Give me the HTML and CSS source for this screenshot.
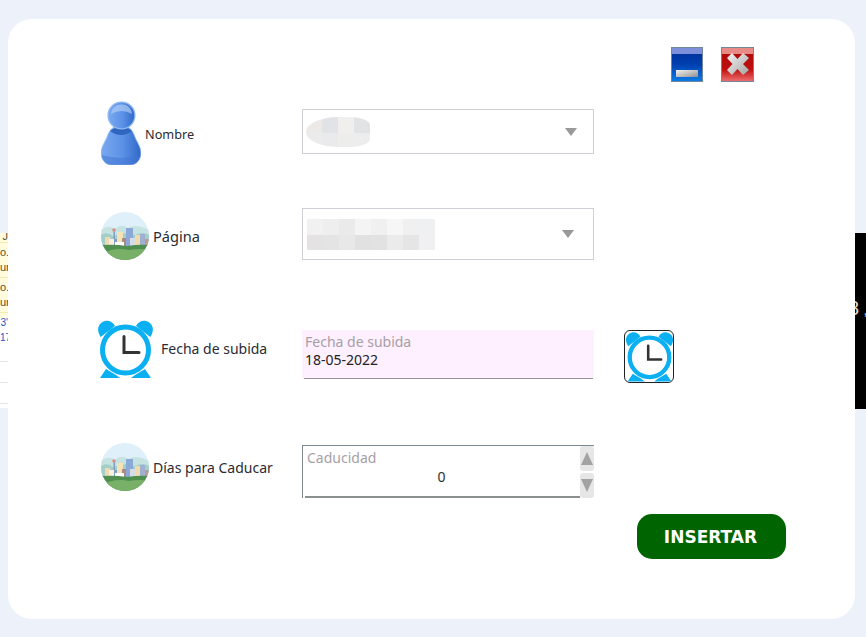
FILE: index.html
```html
<!DOCTYPE html>
<html lang="es">
<head>
  <meta charset="UTF-8" />
  <title>Insertar</title>
  <link rel="stylesheet" href="styles.css">
</head>
<body>
  <svg class="sprite" aria-hidden="true">
    <symbol id="scene" viewBox="0 0 48 48">
      <rect width="48" height="48" fill="#dff0fb"/>
      <path d="M0 18 Q7 12 14 17 Q20 11 27 16 Q35 11 48 18 V34 H0 Z" fill="#c6e3e2"/>
      <path d="M0 23 Q6 19 12 24 Q24 19 34 23 Q42 19 48 23 V34 H0 Z" fill="#a4cfc8"/>
      <rect x="12.500" y="19" width="1.500" height="14" fill="#7f9fc4"/>
      <circle cx="13" cy="18" r="1.800" fill="#dc8f88"/>
      <rect x="4" y="25" width="5" height="9" fill="#efd9b4"/>
      <rect x="8" y="27" width="5" height="7" fill="#f8f0dc"/>
      <rect x="13" y="27" width="3" height="7" fill="#7f9fc8"/>
      <rect x="16" y="20" width="6" height="13" fill="#f5e3b8"/>
      <rect x="21" y="26" width="4" height="8" fill="#a88a80"/>
      <rect x="25" y="16" width="7" height="18" fill="#8aa8d8"/>
      <rect x="29" y="26" width="5" height="8" fill="#d6dde8"/>
      <rect x="34" y="23" width="5" height="10" fill="#efdcae"/>
      <rect x="39" y="22" width="5" height="11" fill="#9fb0d2"/>
      <rect x="44" y="27" width="4" height="7" fill="#b89c96"/>
      <rect x="14" y="30" width="9" height="4" fill="#fff"/>
      <path d="M0 33 Q14 32 26 34 Q38 32 48 33 V48 H0 Z" fill="#4f9050"/>
      <path d="M0 42 Q14 35 28 38 Q40 36 48 38 V48 H0 Z" fill="#79b068"/>
    </symbol>
    <symbol id="alarm" viewBox="0 0 57 58">
      <path d="M3.700 17 C-1 10 1 3 8 1 C12 0 16 2 18 6 Z" fill="#0bb0f3"/>
      <path d="M53.300 17 C58 10 56 3 49 1 C45 0 41 2 39 6 Z" fill="#0bb0f3"/>
      <path d="M3 58 L9 49 L19 55 L23 58 Z" fill="#0bb0f3"/>
      <path d="M54 58 L48 49 L38 55 L34 58 Z" fill="#0bb0f3"/>
      <circle cx="28.500" cy="30" r="23" fill="#fff" stroke="#0bb0f3" stroke-width="5"/>
      <path d="M27 16.500 V32.500 H42" fill="none" stroke="#333" stroke-width="3" stroke-linecap="round"/>
    </symbol>
  </svg>

  <div class="desk">
    <div class="back-left">
      <div class="back-row back-note back-first">J</div>
      <div class="back-row back-note">o.<br>ur</div>
      <div class="back-row back-note">o.<br>ur</div>
      <div class="back-row back-blue">3'<br>17</div>
      <div class="back-row back-line"></div>
      <div class="back-row back-line"></div>
      <div class="back-tail"></div>
    </div>

    <main class="card">
      <div class="win-buttons">
        <button class="win-btn" type="button" aria-label="Minimizar">
          <svg width="32" height="35" viewBox="0 0 32 35">
            <defs>
              <linearGradient id="minBg" x1="0" y1="0" x2="0" y2="1">
                <stop offset="0" stop-color="#002c94"/>
                <stop offset="0.5" stop-color="#0040b0"/>
                <stop offset="1" stop-color="#0a7ce6"/>
              </linearGradient>
              <linearGradient id="minBar" x1="0" y1="0" x2="1" y2="1">
                <stop offset="0" stop-color="#f4f4f4"/>
                <stop offset="1" stop-color="#8f8f8f"/>
              </linearGradient>
            </defs>
            <rect x="0.500" y="0.500" width="31" height="34" fill="url(#minBg)" stroke="#72869c"/>
            <rect x="1" y="1" width="30" height="6" fill="#7d8fdb"/>
            <rect x="5" y="23" width="22" height="7" fill="url(#minBar)"/>
          </svg>
        </button>
        <button class="win-btn" type="button" aria-label="Cerrar">
          <svg width="33" height="35" viewBox="0 0 33 35">
            <defs>
              <linearGradient id="closeBg" x1="0" y1="0" x2="0" y2="1">
                <stop offset="0" stop-color="#a80a0a"/>
                <stop offset="0.65" stop-color="#c01010"/>
                <stop offset="1" stop-color="#f07070"/>
              </linearGradient>
              <linearGradient id="closeX" x1="0" y1="0" x2="1" y2="1">
                <stop offset="0" stop-color="#f4f4f4"/>
                <stop offset="1" stop-color="#a4a4a4"/>
              </linearGradient>
            </defs>
            <rect x="0.500" y="0.500" width="32" height="34" fill="url(#closeBg)" stroke="#72869c"/>
            <rect x="1" y="1" width="31" height="6" fill="#e88a86"/>
            <path d="M6 11 L11 6 L16.500 12 L22 6 L28 11 L22 17 L28 23 L22 28 L16.500 22 L11 28 L6 23 L11.500 17 Z" fill="url(#closeX)"/>
          </svg>
        </button>
      </div>

      <form class="form">
        <div class="row row-nombre">
          <div class="head">
            <svg class="icon-user" width="40" height="64" viewBox="0 0 40 64">
              <defs>
                <linearGradient id="userBody" x1="0" y1="0" x2="1" y2="0">
                  <stop offset="0" stop-color="#7aa9f0"/>
                  <stop offset="0.55" stop-color="#5b90e6"/>
                  <stop offset="1" stop-color="#2f68c6"/>
                </linearGradient>
              </defs>
              <path d="M20 24 C12 24 8 30 6 36 C4 41 0 46 0 52 C0 59 5 64 11 64 H29 C35 64 40 59 40 52 C40 46 36 41 34 36 C32 30 28 24 20 24 Z" fill="url(#userBody)" stroke="#9cc2f4" stroke-width="0.800"/>
              <path d="M9 30 Q20 22 31 30 Q20 38 9 30 Z" fill="#2f66bf"/>
              <path d="M0.500 54 Q20 60 39.500 54 Q38 64 29 64 H11 Q2 64 0.500 54 Z" fill="#3f74d2" opacity="0.5"/>
              <circle cx="20.500" cy="14.500" r="13.400" fill="url(#userBody)" stroke="#8fb8f0" stroke-width="1.300"/>
              <path d="M10 13 Q11 3.500 20.500 3.500 Q30 3.500 31 13 Q20.500 7 10 13 Z" fill="#b4d0f6" opacity="0.65"/>
            </svg>
            <label class="lbl lbl-nombre">Nombre</label>
          </div>
          <div class="select select-nombre">
            <div class="smudge smudge-nombre"></div>
            <span class="arrow"></span>
          </div>
        </div>

        <div class="row row-pagina">
          <div class="head head-pagina">
            <svg class="icon-scene"><use href="#scene"/></svg>
            <label class="lbl lbl-pagina">Página</label>
          </div>
          <div class="select select-pagina">
            <div class="smudge smudge-pagina"></div>
            <span class="arrow"></span>
          </div>
        </div>

        <div class="row row-fecha">
          <div class="head head-fecha">
            <svg class="icon-alarm"><use href="#alarm"/></svg>
            <label class="lbl lbl-fecha">Fecha de subida</label>
          </div>
          <div class="date-field">
            <span class="float-lbl">Fecha de subida</span>
            <span class="date-value">18-05-2022</span>
          </div>
          <button class="alarm-btn" type="button" aria-label="Elegir fecha">
            <svg class="icon-alarm-small"><use href="#alarm"/></svg>
          </button>
        </div>

        <div class="row row-dias">
          <div class="head">
            <svg class="icon-scene"><use href="#scene"/></svg>
            <label class="lbl">Días para Caducar</label>
          </div>
          <div class="num-field">
            <div class="num-input">
              <span class="float-lbl">Caducidad</span>
              <span class="num-value">0</span>
            </div>
            <div class="spin">
              <span class="spin-btn"><i class="spin-up"></i></span>
              <span class="spin-btn"><i class="spin-down"></i></span>
            </div>
          </div>
        </div>

        <div class="actions">
          <button class="submit" type="submit">INSERTAR</button>
        </div>
      </form>
    </main>

    <div class="back-right">8<span class="back-comma">,</span></div>
  </div>
</body>
</html>
```

FILE: styles.css
```css
html, body {
  margin: 0;
  height: 637px;
  overflow: hidden;
}
body {
  background: #edf1f9;
  font-family: "Noto Sans", "Open Sans", Arial, sans-serif;
  color: #2b2b33;
}
.sprite {
  display: block;
  width: 0;
  height: 0;
}
.desk {
  display: flex;
  align-items: flex-start;
  padding-top: 19px;
}

/* bits of the window behind */
.back-left {
  width: 8px;
  margin-top: 214px;
  overflow: hidden;
  flex: none;
  font: 11px/15px "Liberation Sans", Arial, sans-serif;
  text-align: right;
  white-space: nowrap;
}
.back-row {
  box-sizing: border-box;
  background: #fff;
  border-bottom: 1px solid #e6e6e6;
}
.back-note {
  height: 35px;
  padding-top: 2px;
  background: #fffbdc;
  border-bottom-color: #f1e8b4;
  color: #5a5030;
}
.back-first {
  height: 10px;
  padding-top: 0;
  line-height: 6px;
}
.back-blue {
  height: 49px;
  padding-top: 2px;
  color: #1a55c8;
  background: linear-gradient(#fffbdc 5px, #fff 5px);
  font-size: 10px;
}
.back-line {
  height: 21px;
}
.back-tail {
  height: 4px;
  background: #fff;
}
.back-right {
  width: 11px;
  height: 176px;
  margin-top: 214px;
  flex: none;
  overflow: hidden;
  background: #000;
  color: #e8d8c0;
  font: 20px/150px "Liberation Sans", Arial, sans-serif;
  text-indent: -7px;
  white-space: nowrap;
}
.back-comma {
  margin-left: 4px;
  color: #7fb4e8;
  font-size: 16px;
}

.card {
  width: 847px;
  height: 600px;
  flex: none;
  box-sizing: border-box;
  padding-top: 28px;
  background: #fff;
  border-radius: 24px;
}
.win-buttons {
  display: flex;
  justify-content: flex-end;
  gap: 18px;
  padding-right: 101px;
}
.win-btn {
  display: block;
  padding: 0;
  border: none;
  background: none;
  line-height: 0;
}

.form {
  padding: 19px 0 0 89px;
}
.row {
  display: flex;
  align-items: flex-start;
}
.row-pagina {
  margin-top: 43px;
}
.row-fecha, .row-dias {
  margin-top: 60px;
}
.head {
  display: flex;
  align-items: center;
  width: 205px;
  flex: none;
  padding-left: 4px;
  box-sizing: border-box;
}
.head-pagina {
  margin-top: 4px;
}
.head-fecha {
  padding-left: 0;
}
.icon-user {
  display: block;
  flex: none;
}
.icon-scene {
  display: block;
  width: 48px;
  height: 48px;
  flex: none;
  border-radius: 50%;
}
.icon-alarm {
  display: block;
  width: 57px;
  height: 58px;
  flex: none;
}
.lbl {
  margin-left: 4px;
  font-size: 14px;
  white-space: nowrap;
}
.lbl-nombre {
  padding-top: 2px;
  font-size: 12.7px;
}
.lbl-pagina {
  font-size: 14.6px;
}
.lbl-fecha {
  margin-left: 7px;
  padding-bottom: 2px;
}

.select {
  display: flex;
  align-items: center;
  justify-content: space-between;
  width: 292px;
  box-sizing: border-box;
  border: 1px solid #cdd0d6;
  background: #fff;
}
.select-nombre {
  height: 45px;
  margin-top: 8px;
  padding: 0 16px 0 3px;
}
.select-pagina {
  height: 52px;
  padding: 0 19px 0 4px;
}
.arrow {
  width: 0;
  height: 0;
  border-left: 6px solid transparent;
  border-right: 6px solid transparent;
  border-top: 8px solid #999;
}
.smudge {
  flex: none;
}
.smudge-nombre {
  width: 64px;
  height: 30px;
  border-radius: 32px 22px 22px 32px / 15px 8px 8px 15px;
  background:
    linear-gradient(90deg, #ece9e6 25%, #e1e3e7 25% 50%, #f0efed 50% 75%, #e2e3e4 75%) top / 100% 16px no-repeat,
    linear-gradient(90deg, #ebebeb 25%, #eaeaed 25% 50%, #ededeb 50% 75%, #ededed 75%) bottom / 100% 14px no-repeat;
}
.smudge-pagina {
  width: 128px;
  height: 31px;
  background:
    linear-gradient(90deg, #f1f1f1 12.5%, #eee 12.5% 25%, #eaeaea 25% 37.5%, #f4f4f4 37.5% 50%, #f0f0f0 50% 62.5%, #f6f6f6 62.5% 75%, #f0f0f1 75% 87.5%, #eff0f2 87.5%) top / 100% 16px no-repeat,
    linear-gradient(90deg, #e4e2e3 12.5%, #e4e4e4 12.5% 25%, #e8e8e8 25% 37.5%, #e1e1e1 37.5% 50%, #e2e2e2 50% 62.5%, #ebebeb 62.5% 75%, #e5e5e5 75% 87.5%, #f0f0f2 87.5%) bottom / 100% 15px no-repeat;
}

.date-field {
  display: flex;
  flex-direction: column;
  width: 292px;
  height: 49px;
  margin-top: 10px;
  padding: 3px 0 0 3px;
  box-sizing: border-box;
  background: linear-gradient(#9a949a, #9a949a) 2px bottom / 289px 1px no-repeat, #fef0fe;
}
.float-lbl {
  color: #a79fa7;
  font-size: 14px;
  line-height: 18px;
}
.date-value {
  margin-top: -1px;
  color: #222;
  font-size: 14px;
  line-height: 20px;
}
.alarm-btn {
  display: flex;
  align-items: center;
  justify-content: center;
  width: 50px;
  height: 53px;
  margin: 10px 0 0 30px;
  padding: 0;
  box-sizing: border-box;
  border: 1px solid #222;
  border-radius: 6px;
  background: #fff;
  overflow: hidden;
}
.icon-alarm-small {
  display: block;
  width: 49px;
  height: 51px;
  flex: none;
}

.num-field {
  display: flex;
  width: 292px;
  height: 53px;
  margin-top: 2px;
  box-sizing: border-box;
  border-top: 1px solid #7d8790;
}
.num-input {
  display: flex;
  flex-direction: column;
  flex: 1;
  padding: 3px 0 0 4px;
  box-sizing: border-box;
  border-left: 1px solid #7d8790;
  background: linear-gradient(#8a9090, #8a9090) 2px bottom / 100% 2px no-repeat;
}
.num-value {
  font-size: 14px;
  line-height: 20px;
  text-align: center;
  color: #2b3038;
  padding-right: 4px;
}
.spin {
  display: flex;
  flex-direction: column;
  justify-content: space-between;
  width: 14px;
  flex: none;
}
.spin-btn {
  display: flex;
  align-items: center;
  justify-content: center;
  height: 25px;
  border-radius: 3px;
  background: #e6e6e6;
}
.spin-up, .spin-down {
  width: 0;
  height: 0;
  border-left: 6px solid transparent;
  border-right: 6px solid transparent;
}
.spin-up {
  border-bottom: 13px solid #a3a3a3;
}
.spin-down {
  border-top: 13px solid #a3a3a3;
}

.actions {
  display: flex;
  justify-content: flex-end;
  margin-top: 16px;
  padding-right: 69px;
}
.submit {
  width: 149px;
  height: 45px;
  padding: 0 2px 0 0;
  border: none;
  border-radius: 15px;
  background: #006400;
  color: #fff;
  font: bold 17px "DejaVu Sans", Verdana, sans-serif;
}
```
